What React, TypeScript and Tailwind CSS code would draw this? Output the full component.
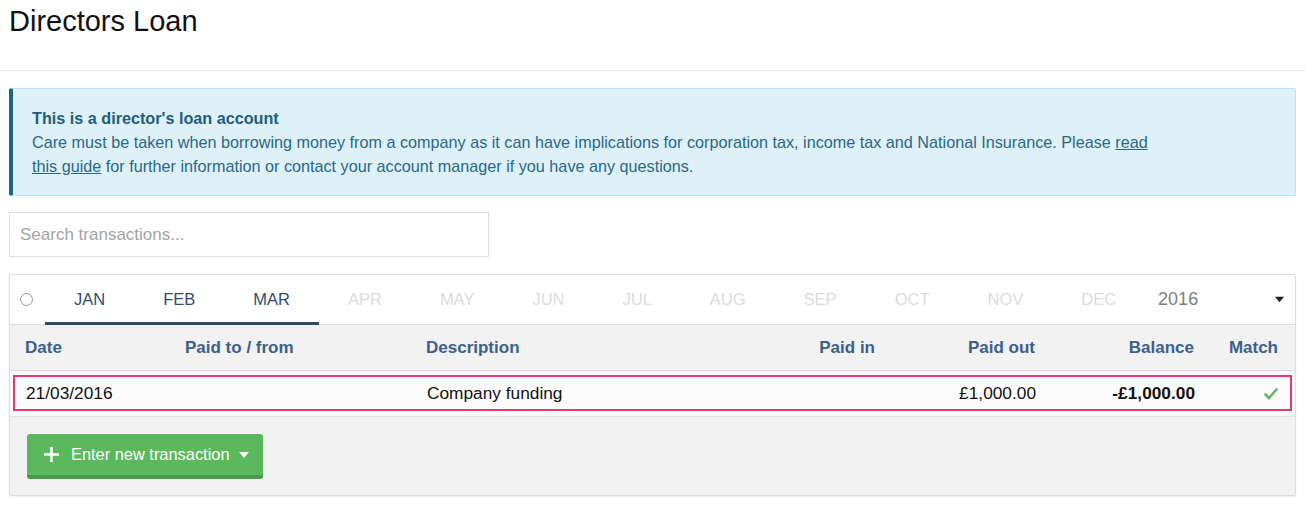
import React from 'react';

const MONTHS = ['JAN', 'FEB', 'MAR', 'APR', 'MAY', 'JUN', 'JUL', 'AUG', 'SEP', 'OCT', 'NOV', 'DEC'];
const ACTIVE = 3; // months with data so far

const cols = 'grid grid-cols-[160px_241px_1fr_160px_160px_159px_84px] items-center';

const Caret = ({ className }: { className?: string }) => (
    <svg viewBox="0 0 10 6" className={className} fill="currentColor">
        <path d="M0 0h10L5 6z" />
    </svg>
);

const Check = () => (
    <svg viewBox="0 0 14 12" className="w-[14px] h-[12px]" fill="none" stroke="#5cb85c" strokeWidth="2.6" strokeLinecap="round">
        <path d="M1.5 6.5 5 10 12.5 1.5" />
    </svg>
);

const MonthTabs = () => (
    <div className="flex items-stretch h-[50px] border-b border-[#dddddd] bg-white">
        <div className="flex items-center pl-[10px] pr-[12px]">
            <span className="w-[13px] h-[13px] rounded-full border border-[#9a9a9a]" />
        </div>
        <div className="flex">
            {MONTHS.map((m, i) => (
                <div
                    key={m}
                    className={
                        i < ACTIVE
                            ? 'px-[29px] flex items-center justify-center text-[16.5px] text-[#2f4d73] border-b-[3px] border-[#34495e] pt-[1px] -mb-[1px]'
                            : 'px-[29px] flex items-center justify-center text-[16.5px] text-[#dcdcdc] pb-[1px]'
                    }
                >
                    {m}
                </div>
            ))}
        </div>
        <div className="flex items-center pl-[13px] pb-[1px] text-[18px] text-[#808080]">2016</div>
        <div className="flex-1 flex items-center justify-end pr-[11px]">
            <Caret className="w-[9px] h-[7px] text-[#222]" />
        </div>
    </div>
);

export default function App() {
    return (
        <div className="min-h-[507px] bg-white font-['Liberation_Sans',Arial,sans-serif] text-[#222]">
            <div className="h-[71px] border-b border-[#ececec] px-[9px] pt-[3px]">
                <h1 className="text-[29px] leading-[36px] text-[#111]">Directors Loan</h1>
            </div>

            <div className="px-[9px]">
                <div className="mt-[17px] bg-[#def1f9] border border-[#bde4f1] border-l-[4px] border-l-[#1d6481] rounded-[2px] pl-[19px] pr-4 pt-[17px] pb-[17px] text-[16.2px] leading-[24px] text-[#2b6886]">
                    <div className="font-bold text-[#1f5e7c]">This is a director's loan account</div>
                    <p>
                        Care must be taken when borrowing money from a company as it can have implications for corporation tax, income tax and National Insurance. Please{' '}
                        <a href="#" className="underline">read</a>
                        <br />
                        <a href="#" className="underline">this guide</a> for further information or contact your account manager if you have any questions.
                    </p>
                </div>

                <input
                    type="text"
                    placeholder="Search transactions..."
                    className="mt-[16px] block w-[480px] h-[45px] border border-[#dedede] px-[10px] text-[17px] text-[#333] placeholder:text-[#a3a3a3] outline-none"
                />

                <div className="mt-[17px] border border-[#dddddd] rounded-[2px] bg-[#f2f2f2] shadow-[0_1px_2px_rgba(0,0,0,0.08)]">
                    <MonthTabs />

                    <div className={`${cols} h-[46px] pl-[15px] pr-[17px] border-b border-[#dddddd] text-[17px] font-bold text-[#3d5f8a]`}>
                        <div>Date</div>
                        <div>Paid to / from</div>
                        <div>Description</div>
                        <div className="text-right">Paid in</div>
                        <div className="text-right">Paid out</div>
                        <div className="text-right">Balance</div>
                        <div className="text-right">Match</div>
                    </div>

                    <div className="bg-[#fafafa] border-b border-[#e3e3e3] pt-[4px] pb-[5px] px-[3px]">
                        <div className={`${cols} h-[36px] pl-[11px] pr-[11px] pt-[1px] border-2 border-[#e8386f] bg-[#fcfcfc] text-[17.3px] text-[#111]`}>
                            <div>21/03/2016</div>
                            <div />
                            <div>Company funding</div>
                            <div />
                            <div className="text-right">£1,000.00</div>
                            <div className="text-right font-bold">-£1,000.00</div>
                            <div className="flex justify-end pr-[1px]">
                                <Check />
                            </div>
                        </div>
                    </div>

                    <div className="pt-[17px] pb-[16px] pl-[17px]">
                        <button className="flex items-center h-[45px] pl-[17px] pr-[13px] rounded-[3px] bg-[#5cb85c] border-b-[4px] border-[#4a9a48] text-white text-[16.4px]">
                            <svg viewBox="0 0 14 14" className="w-[15px] h-[15px] mr-[12px]" stroke="white" strokeWidth="2.4">
                                <path d="M7 0v14M0 7h14" />
                            </svg>
                            <span>Enter new transaction</span>
                            <Caret className="w-[12px] h-[6px] ml-[8px] text-white" />
                        </button>
                    </div>
                </div>
            </div>
        </div>
    );
}
